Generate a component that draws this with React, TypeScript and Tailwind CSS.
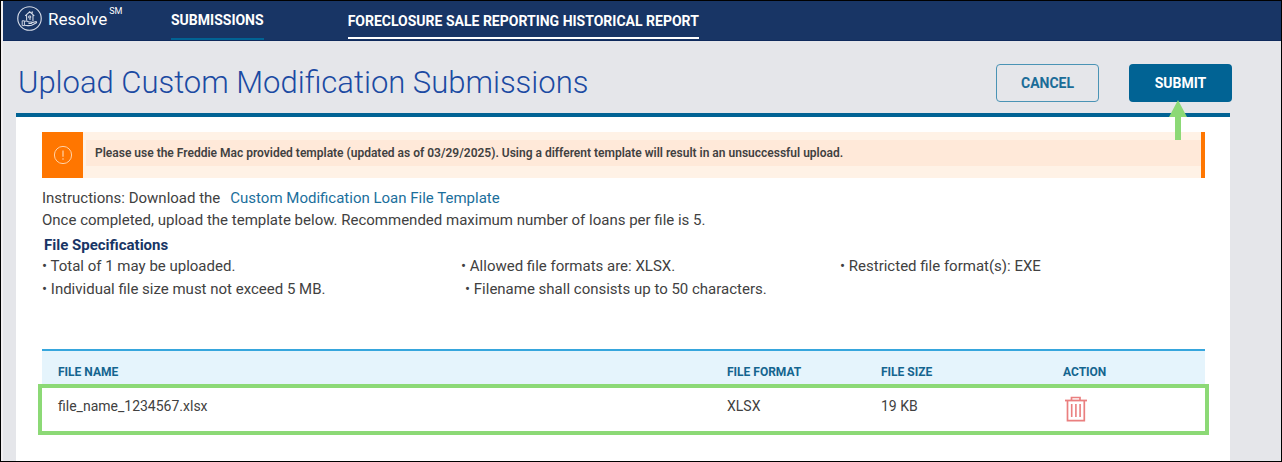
import React from "react";

function HouseInHandLogo() {
  return (
    <svg viewBox="0 0 26 26" className="size-[25px] shrink-0 text-[#d5dbe7]" fill="none" stroke="currentColor" aria-hidden="true">
      <circle cx="13" cy="13" r="12.2" strokeWidth="1.2" />
      <path d="M8.5 10.2 13.2 6l4.8 4.2M10 9.6v5.6M16.6 9.6v6M15.7 8V6.2h1" strokeWidth="1.1" />
      <path d="M12.2 10.4h2v2h-2zM12.4 13.6h2.2" strokeWidth="1" />
      <path d="M5.4 15.4h2.3v5H5.4z" strokeWidth="1" />
      <path d="M7.7 16c2-.9 3.2-.5 4.4.6h2.6c1.1 0 1.1 1.5 0 1.5h-2.8m3.4-.8 4-1c1.2-.2 1.5.9.5 1.4l-4.6 2.3c-2.5.9-4.5.3-7.5 0" strokeWidth="1.1" />
    </svg>
  );
}

function AlertIcon() {
  return (
    <svg viewBox="0 0 20 20" className="size-5 text-[#ffd2a8]" fill="none" stroke="currentColor" aria-hidden="true">
      <circle cx="10" cy="10" r="8.6" strokeWidth="1" />
      <path d="M10 5.5v6.2M10 13.2v1.6" strokeWidth="1.2" />
    </svg>
  );
}

function TrashIcon() {
  return (
    <svg viewBox="0 0 22 26" className="h-[26px] w-[22px]" fill="none" stroke="#ea7f7f" aria-hidden="true">
      <path d="M0 4.5h22" strokeWidth="1.8" />
      <path d="M6.5 4V1.5h8.5V4" strokeWidth="1.7" />
      <path d="M2.5 5v19.7h16.8V5" strokeWidth="1.7" />
      <path d="M6.7 8v13M10.9 8v13M15.1 8v13" strokeWidth="1.6" />
    </svg>
  );
}

const specs = [
  "Total of 1 may be uploaded.",
  "Allowed file formats are: XLSX.",
  "Restricted file format(s): EXE",
  "Individual file size must not exceed 5 MB.",
  "Filename shall consists up to 50 characters.",
];

export default function App() {
  return (
    <div className="flex min-h-screen flex-col border border-black bg-[#e5e6ea] font-['Roboto',sans-serif] text-[#414141]">
      <div className="flex grow flex-col border-l-2 border-[#f1eff1]">
        <header className="flex h-10 items-stretch border-b border-[#0f2a5c] bg-[#183565] text-white">
          <a href="#home" className="flex w-[168px] items-center pb-1 pl-[14px]">
            <HouseInHandLogo />
            <span className="ml-1.5 text-[17px] leading-6">Resolve</span>
            <sup className="top-0 mb-4 ml-0.5 text-[9px] leading-3">SM</sup>
          </a>
          <nav className="flex items-stretch gap-21 text-sm font-bold">
            <a href="#submissions" className="flex items-center border-b-2 border-[#016394]">SUBMISSIONS</a>
            <a href="#report" className="mb-px flex items-center border-b-2 border-white pt-1">
              FORECLOSURE SALE REPORTING HISTORICAL REPORT
            </a>
          </nav>
        </header>

        <main className="flex grow flex-col pr-[51px] pl-[13px]">
          <div className="-mr-0.5 flex h-18 items-center justify-between pt-3">
            <h1 className="pl-0.5 text-[31px] leading-10 font-light text-[#1b4aa2]">Upload Custom Modification Submissions</h1>
            <div className="flex gap-[30px]">
              <button type="button" className="h-[38px] w-[103px] rounded-sm border border-[#4a93b5] text-sm font-bold text-[#1b6c98]">
                CANCEL
              </button>
              <button type="button" className="relative h-[38px] w-[103px] rounded-sm bg-[#016394] text-sm font-bold text-white">
                SUBMIT
                <svg viewBox="0 0 18 40" className="absolute top-[36px] left-[40px] h-10 w-[18px]" aria-hidden="true">
                  <path d="M9 0 18 17h-6v23H6V17H0z" fill="#8cd976" />
                </svg>
              </button>
            </div>
          </div>

          <section className="grow border-t-4 border-[#016394] bg-white pt-[15px] pr-[25px] pb-6 pl-[26px]">
            <div role="alert" className="flex h-[46px] items-stretch border-r-4 border-[#ff7600] bg-[#fff2e6]">
              <div className="flex w-[41px] items-center justify-center bg-[#ff7600]">
                <AlertIcon />
              </div>
              <p className="mt-2 mb-3 ml-[3px] grow bg-[#ffe9d9] pl-[9px] text-xs leading-[26px] font-semibold">
                Please use the Freddie Mac provided template (updated as of 03/29/2025). Using a different template will
                result in an unsuccessful upload.
              </p>
            </div>

            <p className="mt-2 text-[15px] leading-6">
              Instructions: Download the
              <a href="#template" className="ml-2.5 text-[#1b6f9c]">Custom Modification Loan File Template</a>
            </p>
            <p className="text-[15px] leading-5">
              Once completed, upload the template below. Recommended maximum number of loans per file is 5.
            </p>

            <h2 className="mt-[5px] pl-0.5 text-[15px] leading-5 font-bold text-[#183565]">File Specifications</h2>
            <ul className="grid grid-cols-[419fr_379fr_365fr] text-[15px] leading-[23px]">
              {specs.map((spec, i) => (
                <li key={spec} className={i === 4 ? "pl-1" : ""}>• {spec}</li>
              ))}
            </ul>

            <table className="mt-12 w-full table-fixed border-collapse text-left text-sm">
              <thead>
                <tr className="h-[38px] border-t-2 border-[#36a6dd] bg-[#e5f4fc] text-xs text-[#14658f]">
                  <th scope="col" className="pt-1 pl-4">FILE NAME</th>
                  <th scope="col" className="w-[154px] pt-1 pl-4">FILE FORMAT</th>
                  <th scope="col" className="w-[182px] pt-1 pl-4">FILE SIZE</th>
                  <th scope="col" className="w-[158px] pt-1 pl-4">ACTION</th>
                </tr>
              </thead>
              <tbody>
                <tr className="h-[43px] outline-4 outline-[#8cd976]">
                  <td className="pb-2 pl-4">file_name_1234567.xlsx</td>
                  <td className="pb-2 pl-4">XLSX</td>
                  <td className="pb-2 pl-4">19 KB</td>
                  <td className="pb-0.5 pl-[18px]">
                    <button type="button" aria-label="Delete file_name_1234567.xlsx" className="block">
                      <TrashIcon />
                    </button>
                  </td>
                </tr>
              </tbody>
            </table>
          </section>
        </main>
      </div>
    </div>
  );
}
